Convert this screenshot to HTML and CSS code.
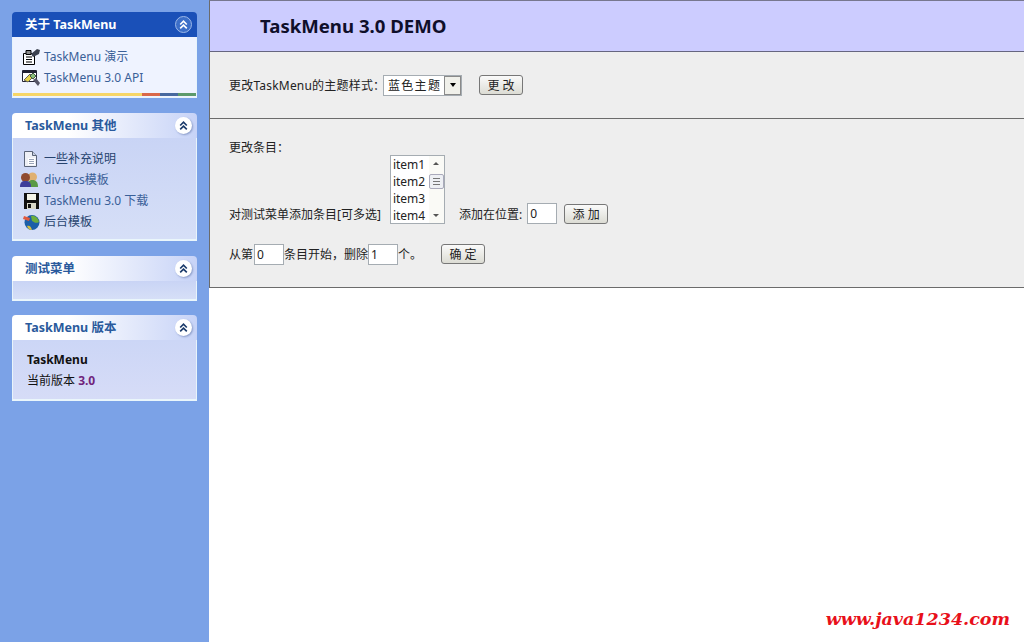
FILE: index.html
```html
<!DOCTYPE html>
<html lang="zh-CN">
<head>
  <meta charset="UTF-8" />
  <title>TaskMenu 3.0 DEMO</title>
  <link rel="stylesheet" href="styles.css">
</head>
<body>

  <!-- SIDEBAR -->
  <div class="sidebar">

    <div class="panel panel-first">
      <div class="panel-head">
        <span>关于 TaskMenu</span>
        <span class="toggle"><svg viewBox="0 0 10 10"><path d="M2 5 5 2l3 3M2 8.500 5 5.500l3 3"/></svg></span>
      </div>
      <div class="panel-body">
        <a class="menu-item" href="#">
          <svg class="icon" viewBox="0 0 18 16">
            <path d="M1.500 4.500h11v11h-11z" fill="#fff" stroke="#000"/>
            <path d="M4 8h6M4 10.500h6M4 13h6" stroke="#000"/>
            <path d="M4 1.500h5v4H4z" fill="#8a8a8a" stroke="#000"/>
            <path d="M9 5l6-5 3 1-1 4-6 3z" fill="#3c4250"/>
          </svg>
          TaskMenu 演示
        </a>
        <a class="menu-item" href="#">
          <svg class="icon" viewBox="0 0 18 16">
            <path d="M.5 .5h14v11H.5z" fill="#fff" stroke="#223"/>
            <path d="M1 1h14v2H1z" fill="#223"/>
            <path d="M2 10l6-6 3 3-5 5z" fill="#e8d44a" stroke="#665"/>
            <path d="M8 6l3-3 3 3-3 3z" fill="#8ac07a" stroke="#454"/>
            <path d="M11 10l3-2 4 5-2 3z" fill="#556"/>
          </svg>
          TaskMenu 3.0 API
        </a>
      </div>
      <div class="rainbow">
        <i class="c-yellow"></i><i class="c-red"></i><i class="c-blue"></i><i class="c-green"></i>
      </div>
    </div>

    <div class="panel panel-other">
      <div class="panel-head">
        <span>TaskMenu 其他</span>
        <span class="toggle"><svg viewBox="0 0 10 10"><path d="M2 5 5 2l3 3M2 8.500 5 5.500l3 3"/></svg></span>
      </div>
      <div class="panel-body">
        <a class="menu-item dark" href="#">
          <svg class="icon" viewBox="0 0 18 16">
            <path d="M2.500 .5h8l4 4v11h-12z" fill="#eef0f6" stroke="#5a6478"/>
            <path d="M10.500 .5v4h4" fill="#c8d0e0" stroke="#5a6478"/>
            <path d="M6 7h7v7H6z" fill="#fff"/>
            <path d="M7 8.500h5M7 10.500h5M7 12.500h5" stroke="#9aa4b8"/>
          </svg>
          一些补充说明
        </a>
        <a class="menu-item" href="#">
          <svg class="icon people" viewBox="0 0 18 16">
            <circle cx="12.500" cy="5" r="4.500" fill="#e0b070"/>
            <path d="M7 15c0-5 2-7 5.500-7s5.500 2 5.500 7z" fill="#5a9a45"/>
            <circle cx="5.500" cy="5.500" r="4.500" fill="#8f4a30"/>
            <path d="M0 15c0-5 2-6 5.500-6s5.500 1 5.500 6z" fill="#3d3d9a"/>
          </svg>
          div+css模板
        </a>
        <a class="menu-item" href="#">
          <svg class="icon" viewBox="0 0 18 16">
            <path d="M2 0h15v16H2z" fill="#111"/>
            <path d="M5 1h9v6H5z" fill="#f4f4e8"/>
            <path d="M5 10h9v6H5z" fill="#d8d8c8"/>
            <path d="M6 11h3v4H6z" fill="#111"/>
          </svg>
          TaskMenu 3.0 下载
        </a>
        <a class="menu-item dark" href="#">
          <svg class="icon" viewBox="0 0 18 16">
            <circle cx="10" cy="8.500" r="7.500" fill="#1c5fa8"/>
            <path d="M9 2c3-1 7 1 8 6-3 2-5 0-7-1z" fill="#6cae3c"/>
            <path d="M5 12c2-1 4 0 5 4-2 0-4-1-5-4z" fill="#d8c040"/>
            <path d="M2 2l6 2-1 3-6-2z" fill="#e05a40"/>
          </svg>
          后台模板
        </a>
      </div>
    </div>

    <div class="panel panel-test">
      <div class="panel-head">
        <span>测试菜单</span>
        <span class="toggle"><svg viewBox="0 0 10 10"><path d="M2 5 5 2l3 3M2 8.500 5 5.500l3 3"/></svg></span>
      </div>
      <div class="panel-body"></div>
    </div>

    <div class="panel panel-version">
      <div class="panel-head">
        <span>TaskMenu 版本</span>
        <span class="toggle"><svg viewBox="0 0 10 10"><path d="M2 5 5 2l3 3M2 8.500 5 5.500l3 3"/></svg></span>
      </div>
      <div class="panel-body">
        <p class="version-name">TaskMenu</p>
        <p>当前版本 <b class="version-no">3.0</b></p>
      </div>
    </div>

  </div>

  <!-- MAIN -->
  <div class="main">
    <div class="top">
      <h1>TaskMenu 3.0 DEMO</h1>
      <div class="section theme-row">
        <span class="theme-label">更改TaskMenu的主题样式：</span>
        <div class="combo">
          <span class="combo-text">蓝色主题</span>
          <span class="combo-arrow"><i></i></span>
        </div>
        <button class="btn">更 改</button>
      </div>
      <div class="section items">
        <p>更改条目：</p>
        <div class="add-row">
          <span>对测试菜单添加条目[可多选]</span>
          <div class="listbox">
            <div class="list-items">
              <span>item1</span><span>item2</span><span>item3</span><span>item4</span>
            </div>
            <div class="list-scroll">
              <i class="up"></i>
              <b class="thumb"></b>
              <i class="down"></i>
            </div>
          </div>
          <span class="pos-label">添加在位置:</span>
          <input class="num" type="text" value="0">
          <button class="btn">添 加</button>
        </div>
        <div class="del-row">
          <span>从第</span>
          <input class="num" type="text" value="0">
          <span>条目开始，删除</span>
          <input class="num" type="text" value="1">
          <span>个。</span>
          <button class="btn">确 定</button>
        </div>
      </div>
    </div>
    <div class="watermark">www.java1234.com</div>
  </div>

</body>
</html>
```

FILE: styles.css
```css
* {
  box-sizing: border-box;
}

html, body {
  height: 100%;
}

body {
  margin: 0;
  display: flex;
  overflow: hidden;
  background: #fff;
  color: #222;
  font: 12px/21px "Noto Sans", "Noto Sans CJK SC", sans-serif;
}

p {
  margin: 0;
}

/* Sidebar */
.sidebar {
  width: 209px;
  flex: none;
  padding: 12px 12px 0;
  background: #7ba2e7;
}

.panel {
  margin-bottom: 15px;
}

.panel-test {
  margin-bottom: 14px;
}

.panel-head {
  height: 25px;
  padding: 0 5px 0 13px;
  display: flex;
  align-items: center;
  justify-content: space-between;
  border-radius: 4px 4px 0 0;
  background: linear-gradient(to right, #fff 30%, #c7d3f7);
  color: #2a5a9c;
  font-weight: bold;
  font-size: 12.500px;
}

.panel-first .panel-head {
  background: #1a50b8;
  color: #fff;
}

.toggle {
  width: 17px;
  height: 17px;
  display: flex;
  border-radius: 50%;
  background: #fff;
  box-shadow: 1px 1px 2px #8a9bc8;
}

.panel-first .toggle {
  background: #3b6ec8;
  border: 1px solid #9db8e8;
  box-shadow: none;
}

.toggle svg {
  width: 11px;
  height: 11px;
  margin: auto;
  fill: none;
  stroke: #1a3a6a;
  stroke-width: 1.500;
}

.panel-first .toggle svg {
  stroke: #fff;
}

.panel-body {
  padding: 10px 9px 8px;
  background: linear-gradient(to bottom, #c9d4f5, #d6dff7);
  border: 1px solid #e8f4fb;
  border-top: none;
  border-bottom: 2px solid #eaf6fb;
}

.panel-first .panel-body {
  height: 56px;
  padding: 9px 9px 0;
  background: #eff3ff;
  border-bottom: none;
}

.panel-other .panel-body {
  height: 103px;
}

.panel-test .panel-body {
  height: 20px;
}

.panel-version .panel-body {
  height: 61px;
  padding: 9px 14px;
  background: linear-gradient(to bottom, #ccd6f6, #d6dcf7);
  color: #111;
}

.version-name {
  font-weight: bold;
}

.version-no {
  color: #70247c;
}

.menu-item {
  height: 21px;
  display: flex;
  align-items: center;
  gap: 4px;
  color: #3a6098;
  text-decoration: none;
  white-space: nowrap;
}

.menu-item.dark {
  color: #26436e;
}

.icon {
  width: 18px;
  height: 16px;
  flex: none;
}

.people {
  margin-left: -2px;
  margin-right: 2px;
}

.rainbow {
  height: 5px;
  display: flex;
  border: 1px solid #e8f4fb;
  border-top: none;
  background: #eff3ff;
}

.rainbow i {
  height: 3px;
}

.c-yellow {
  width: 129px;
  background: #f7d668;
}

.c-red {
  width: 18px;
  background: #d9684a;
}

.c-blue {
  width: 18px;
  background: #47689f;
}

.c-green {
  flex: 1;
  background: #5c9a6c;
}

/* Main */
.main {
  flex: 1;
  display: flex;
  flex-direction: column;
  justify-content: space-between;
}

.top {
  height: 288px;
  border: 1px solid #6b6b6b;
  border-top-color: #77778f;
  border-right: none;
  background: #eee;
}

h1 {
  height: 51px;
  margin: 0;
  padding-left: 50px;
  background: #ccf;
  border-bottom: 1px solid #666680;
  color: #0f0f2a;
  font-size: 18.600px;
  line-height: 50px;
}

.section {
  padding-left: 19px;
}

.theme-row {
  height: 67px;
  display: flex;
  align-items: center;
  border-bottom: 1px solid #6b6b6b;
}

.theme-label {
  width: 154px;
  letter-spacing: .2px;
  white-space: nowrap;
}

.combo {
  width: 79px;
  height: 21px;
  display: flex;
  border: 1px solid #a5acb2;
  background: #fff;
}

.combo-text {
  flex: 1;
  padding-left: 4px;
  letter-spacing: 1.300px;
  line-height: 19px;
}

.combo-arrow {
  width: 17px;
  display: flex;
  border: 1px solid #8a8a8a;
  background: #f0f0ea;
}

.combo-arrow i {
  margin: auto;
  border: 3px solid transparent;
  border-top: 4px solid #000;
  border-bottom: none;
}

.btn {
  height: 20px;
  margin-left: 17px;
  padding: 0 7px;
  border: 1px solid #777;
  border-radius: 3px;
  background: linear-gradient(to bottom, #fafafa, #dcdcd4);
  color: #222;
  font: 12px "Noto Sans", "Noto Sans CJK SC", sans-serif;
  white-space: nowrap;
}

.theme-row .btn {
  width: 44px;
}

.items {
  padding-top: 18px;
}

.add-row {
  height: 69px;
  margin-top: -3px;
  display: flex;
  align-items: flex-end;
}

.add-row > span {
  line-height: 18px;
}

.listbox {
  width: 55px;
  height: 69px;
  margin-left: 9px;
  display: flex;
  border: 1px solid #a5acb2;
  background: #fff;
}

.list-items {
  flex: 1;
  padding-left: 2px;
  display: flex;
  flex-direction: column;
  line-height: 17px;
}

.list-scroll {
  width: 15px;
  display: flex;
  flex-direction: column;
  align-items: center;
  background: #fafaf6;
}

.list-scroll .up,
.list-scroll .down {
  margin: 6px 0;
  border: 3px solid transparent;
}

.list-scroll .up {
  margin-bottom: 9px;
  border-bottom-color: #555;
  border-top: none;
}

.list-scroll .down {
  margin-top: auto;
  border-top-color: #555;
  border-bottom: none;
}

.thumb {
  width: 15px;
  height: 15px;
  border: 1px solid #aab;
  border-radius: 2px;
  background: #eef0f4 repeating-linear-gradient(to bottom, #777 0 1px, transparent 1px 3px) center / 7px 7px no-repeat;
}

.pos-label {
  margin-left: 14px;
}

.num {
  width: 30px;
  height: 21px;
  padding: 0 0 0 2px;
  border: 1px solid #a5acb2;
  background: #fff;
  color: #222;
  font: 12px "Noto Sans", sans-serif;
  outline: none;
}

.add-row .num {
  margin-left: 5px;
}

.add-row .btn {
  width: 44px;
  margin-left: 7px;
}

.del-row {
  margin-top: 19px;
  display: flex;
  align-items: center;
  height: 22px;
}

.del-row .num:first-of-type {
  margin-left: 1px;
}

.del-row .btn {
  width: 44px;
  margin-left: 19px;
}

.watermark {
  padding: 0 14px 13px 0;
  text-align: right;
  color: #e8101a;
  font: italic bold 17.500px "DejaVu Serif", serif;
}
```
